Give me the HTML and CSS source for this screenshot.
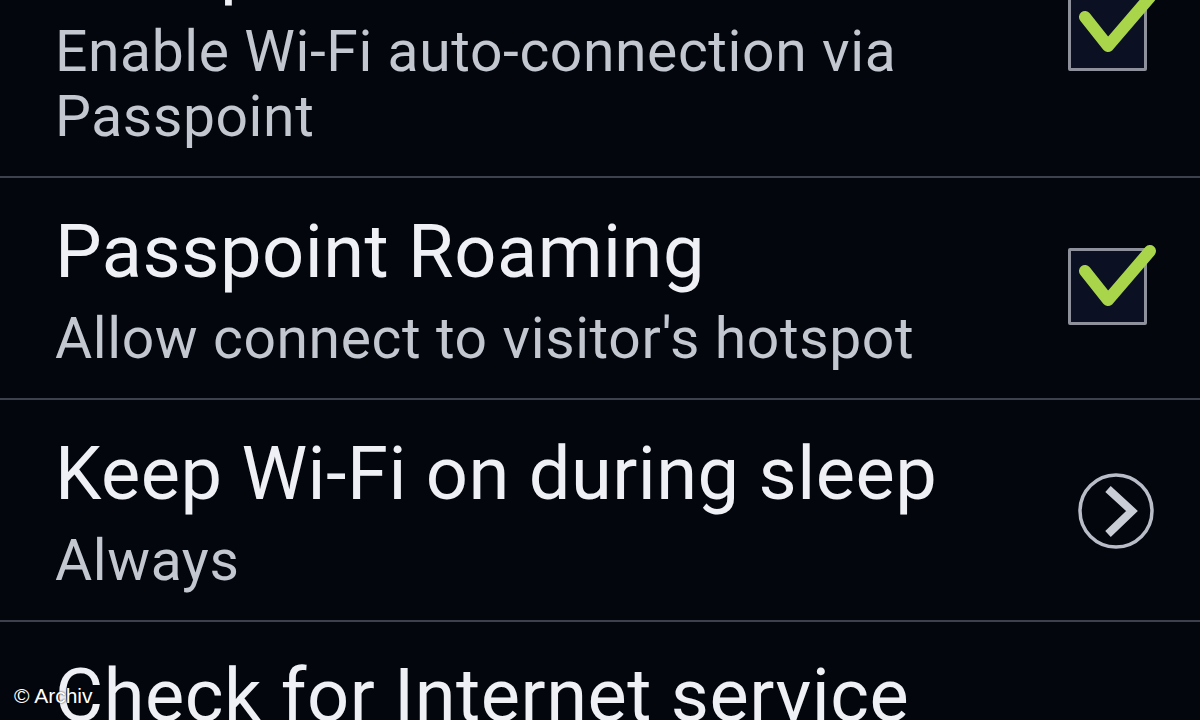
FILE: index.html
```html
<!DOCTYPE html>
<html lang="en">
<head>
<meta charset="utf-8">
<title>Wi-Fi settings</title>
<link rel="stylesheet" href="styles.css">
</head>
<body>
<div class="screen">
  <ul class="list">
    <li class="row">
      <div class="text">
        <div class="title">Passpoint</div>
        <div class="summary">Enable Wi-Fi auto-connection via<br>Passpoint</div>
      </div>
      <div class="control">
        <span class="checkbox checked">
          <svg class="tick" viewBox="0 0 100 80" width="100" height="80"><polyline points="17,23 40,52 82,3" fill="none" stroke="#a9d54b" stroke-width="12" stroke-linecap="round" stroke-linejoin="round"/></svg>
        </span>
      </div>
    </li>
    <li class="row">
      <div class="text">
        <div class="title">Passpoint Roaming</div>
        <div class="summary">Allow connect to visitor's hotspot</div>
      </div>
      <div class="control">
        <span class="checkbox checked">
          <svg class="tick" viewBox="0 0 100 80" width="100" height="80"><polyline points="17,23 40,52 82,3" fill="none" stroke="#a9d54b" stroke-width="12" stroke-linecap="round" stroke-linejoin="round"/></svg>
        </span>
      </div>
    </li>
    <li class="row">
      <div class="text">
        <div class="title">Keep Wi-Fi on during sleep</div>
        <div class="summary">Always</div>
      </div>
      <div class="control">
        <svg class="more" viewBox="0 0 80 80" width="80" height="80"><circle cx="40" cy="40" r="36" fill="none" stroke="#b9bdc7" stroke-width="3.5"/><polyline points="32,18 56,40 32,63" fill="none" stroke="#c9cdd6" stroke-width="8" stroke-linejoin="miter"/></svg>
      </div>
    </li>
    <li class="row">
      <div class="text">
        <div class="title">Check for Internet service</div>
        <div class="summary">Check whether Internet service is available</div>
      </div>
      <div class="control"></div>
    </li>
  </ul>
  <div class="credit">© Archiv</div>
</div>
</body>
</html>
```

FILE: styles.css
```css
html, body {
  margin: 0;
  padding: 0;
  background: #04060e;
}
.screen {
  position: relative;
  width: 1200px;
  height: 720px;
  overflow: hidden;
  background: #04060e;
  font-family: Roboto, "Noto Sans", sans-serif;
}
.list {
  list-style: none;
  margin: -109px 0 0 0;
  padding: 0;
}
.row {
  display: flex;
  align-items: center;
  padding: 36px 48px 27px 55px;
  border-bottom: 2px solid #3d414b;
}
.text {
  flex: 1;
  min-width: 0;
}
.title {
  font-size: 74px;
  line-height: 76px;
  letter-spacing: 0.5px;
  color: #eef0f5;
  white-space: nowrap;
}
.summary {
  margin-top: 16px;
  font-size: 57px;
  line-height: 65px;
  letter-spacing: 0.6px;
  color: #c3c7cf;
  white-space: nowrap;
}
.control {
  width: 86px;
  display: flex;
  justify-content: flex-end;
}
.checkbox {
  position: relative;
  display: block;
  width: 79px;
  height: 77px;
  margin-right: 5px;
  margin-bottom: 12px;
  box-sizing: border-box;
  border: 3px solid #8e919c;
  border-radius: 2px;
  background: #0b1022;
}
.tick {
  position: absolute;
  left: -3px;
  top: -3px;
  overflow: visible;
}
.more {
  display: block;
  margin-right: -4px;
  margin-bottom: 8px;
}
.credit {
  position: absolute;
  left: 14px;
  top: 684px;
  font-family: "Liberation Sans", Arial, sans-serif;
  font-size: 21px;
  color: #ffffff;
  text-shadow: 0 0 2px #000;
}
```
